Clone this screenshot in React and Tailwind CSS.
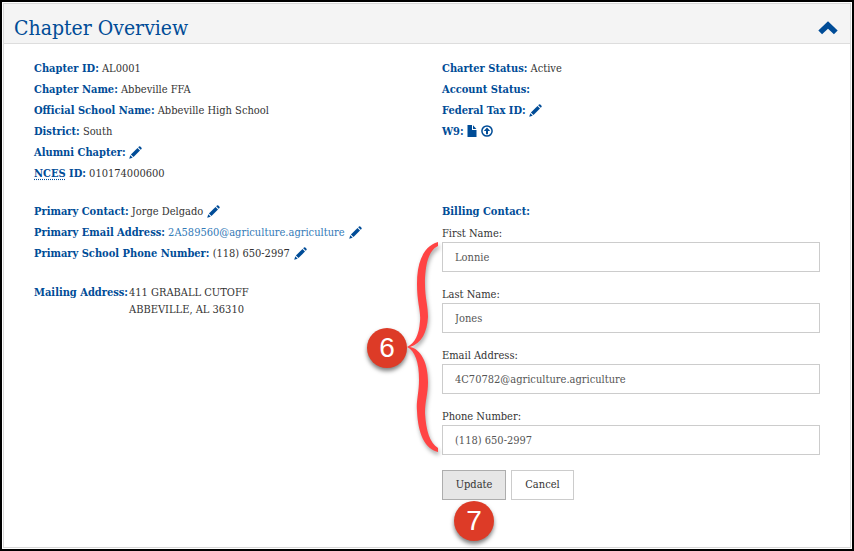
import React, { useState } from "react";

const PencilIcon = () => (
  <svg viewBox="0 0 13 13" className="inline-block w-[13px] h-[13px] align-[-3px]" fill="currentColor" aria-hidden="true">
    <path d="M0.2 12.8 L1.3 9.3 L3.7 11.7 Z" />
    <path d="M1.9 8.5 L8.5 2 L11 4.5 L4.5 11.1 Z" />
    <path d="M9.2 1.3 L10 0.5 Q10.7 0 11.3 0.5 L12.5 1.7 Q13 2.4 12.5 3 L11.7 3.8 Z" />
  </svg>
);

const FileIcon = () => (
  <svg viewBox="0 0 10 12" className="inline-block w-[10px] h-[12px] align-[-2px]" fill="currentColor" aria-hidden="true">
    <path d="M0.5 0 H5 V5 H9.5 V12 H0.5 Z" />
    <path d="M6 0.2 L9.4 4 H6 Z" />
  </svg>
);

const UploadIcon = () => (
  <svg viewBox="0 0 12 12" className="inline-block w-[12px] h-[12px] align-[-2px]" aria-hidden="true">
    <circle cx="6" cy="6" r="5.1" fill="none" stroke="currentColor" strokeWidth="1.5" />
    <path d="M6 2.4 L9.2 6 H7 V9.2 H5 V6 H2.8 Z" fill="currentColor" />
  </svg>
);

const ChevronIcon = () => (
  <svg viewBox="0 0 20 14" className="w-5 h-[14px]" aria-hidden="true">
    <path d="M2.2 11.4 L10 4 L17.8 11.4" fill="none" stroke="currentColor" strokeWidth="5.4" />
  </svg>
);

const EditButton = ({ label, className = "ml-1" }) => (
  <button type="button" aria-label={label} className={`${className} text-[#004c97] leading-none`}>
    <PencilIcon />
  </button>
);

const Row = ({ label, children }) => (
  <div className="leading-[21px] whitespace-nowrap">
    <b className="text-[#004c97]">{label}</b> {children}
  </div>
);

const Badge = ({ children }) => (
  <span className="flex h-10 w-10 items-center justify-center rounded-full bg-[#dd3b27] font-['Liberation_Sans'] text-[28px] leading-none text-white shadow-[0_3px_4px_rgba(0,0,0,0.5)]">
    {children}
  </span>
);

const Brace = () => (
  <svg viewBox="0 0 32 214" className="h-[214px] w-8 overflow-visible drop-shadow-[1px_3px_2px_rgba(0,0,0,0.35)]" fill="#ff4444" aria-hidden="true">
    <path d="M31 1 C17 5 10 20 10 43 C10 62 14 70 13 80 C12 94 8 102 0 106 C8 110 12 121 12 139 C12 152 9 160 10 170 C11 193 18 208 31 211 L31 207 C23 202 19 190 18 172 C18 160 21 153 21 141 C21 122 14 108 3 106 C15 102 20 91 21 76 C21 64 18 57 18 43 C18 23 22 9 31 5 Z" />
  </svg>
);

const fields = [
  { id: "firstName", label: "First Name:" },
  { id: "lastName", label: "Last Name:" },
  { id: "email", label: "Email Address:" },
  { id: "phone", label: "Phone Number:" },
];

const App = () => {
  const [open, setOpen] = useState(true);
  const [values, setValues] = useState({
    firstName: "Lonnie",
    lastName: "Jones",
    email: "4C70782@agriculture.agriculture",
    phone: "(118) 650-2997",
  });

  const handleChange = (e) => setValues({ ...values, [e.target.id]: e.target.value });

  return (
    <div className="border-2 border-black bg-white p-px font-['Roboto_Slab','DejaVu_Serif_Condensed','DejaVu_Serif',serif] text-[11px] text-[#333333]">
      <section className="border border-[#d8d8d8]">
        <header className="flex h-10 items-center justify-between border-b border-[#dddddd] bg-[#f4f4f4] pl-[10px] pr-3 pt-2">
          <h1 className="text-[21px] leading-7 text-[#004c97]">Chapter Overview</h1>
          <button type="button" aria-label="Toggle section" className="text-[#004c97]" onClick={() => setOpen(!open)}>
            <ChevronIcon />
          </button>
        </header>

        {open && (
          <div className="px-[30px] pt-[14px] pb-[47px]">
            <div className="grid grid-cols-[408px_1fr]">
              <div>
                <Row label="Chapter ID:">AL0001</Row>
                <Row label="Chapter Name:">Abbeville FFA</Row>
                <Row label="Official School Name:">Abbeville High School</Row>
                <Row label="District:">South</Row>
                <Row label="Alumni Chapter:"><EditButton label="Edit alumni chapter" className="ml-0" /></Row>
                <Row label={<><abbr className="underline decoration-dotted underline-offset-2">NCES</abbr> ID:</>}>010174000600</Row>
              </div>
              <div>
                <Row label="Charter Status:">Active</Row>
                <Row label="Account Status:" />
                <Row label="Federal Tax ID:"><EditButton label="Edit federal tax ID" className="ml-0" /></Row>
                <Row label="W9:">
                  <button type="button" aria-label="View W9" className="text-[#004c97] leading-none"><FileIcon /></button>
                  <button type="button" aria-label="Upload W9" className="ml-1 text-[#004c97] leading-none"><UploadIcon /></button>
                </Row>
              </div>
            </div>

            <div className="mt-[17px] grid grid-cols-[408px_1fr]">
              <div>
                <Row label="Primary Contact:">Jorge Delgado<EditButton label="Edit primary contact" /></Row>
                <Row label="Primary Email Address:">
                  <a href="mailto:2A589560@agriculture.agriculture" className="text-[#337ab7]">2A589560@agriculture.agriculture</a>
                  <EditButton label="Edit primary email" />
                </Row>
                <Row label="Primary School Phone Number:">(118) 650-2997<EditButton label="Edit school phone" /></Row>
                <div className="mt-5 flex gap-px leading-[17px]">
                  <b className="text-[#004c97]">Mailing Address:</b>
                  <address className="not-italic">
                    411 GRABALL CUTOFF<br />
                    ABBEVILLE, AL 36310
                  </address>
                </div>
              </div>

              <form className="relative" onSubmit={(e) => e.preventDefault()}>
                <Row label="Billing Contact:" />
                <div className="mt-1 space-y-[15px]">
                  {fields.map((f) => (
                    <div key={f.id}>
                      <label htmlFor={f.id} className="block leading-4">{f.label}</label>
                      <input
                        id={f.id}
                        value={values[f.id]}
                        onChange={handleChange}
                        className="block h-[30px] w-full max-w-[378px] border border-[#cccccc] bg-white px-3 text-[#555555]"
                      />
                    </div>
                  ))}
                </div>
                <div className="mt-[15px] flex gap-[5px]">
                  <button type="submit" className="h-[30px] w-16 border border-[#adadad] bg-[#e6e6e6]">Update</button>
                  <button type="button" className="h-[30px] w-[63px] border border-[#cccccc] bg-white">Cancel</button>
                </div>

                <div className="pointer-events-none absolute -left-[75px] top-10 flex items-center">
                  <Badge>6</Badge>
                  <Brace />
                </div>
                <div className="pointer-events-none absolute left-3 top-[300px]">
                  <Badge>7</Badge>
                </div>
              </form>
            </div>
          </div>
        )}
      </section>
    </div>
  );
};

export default App;
